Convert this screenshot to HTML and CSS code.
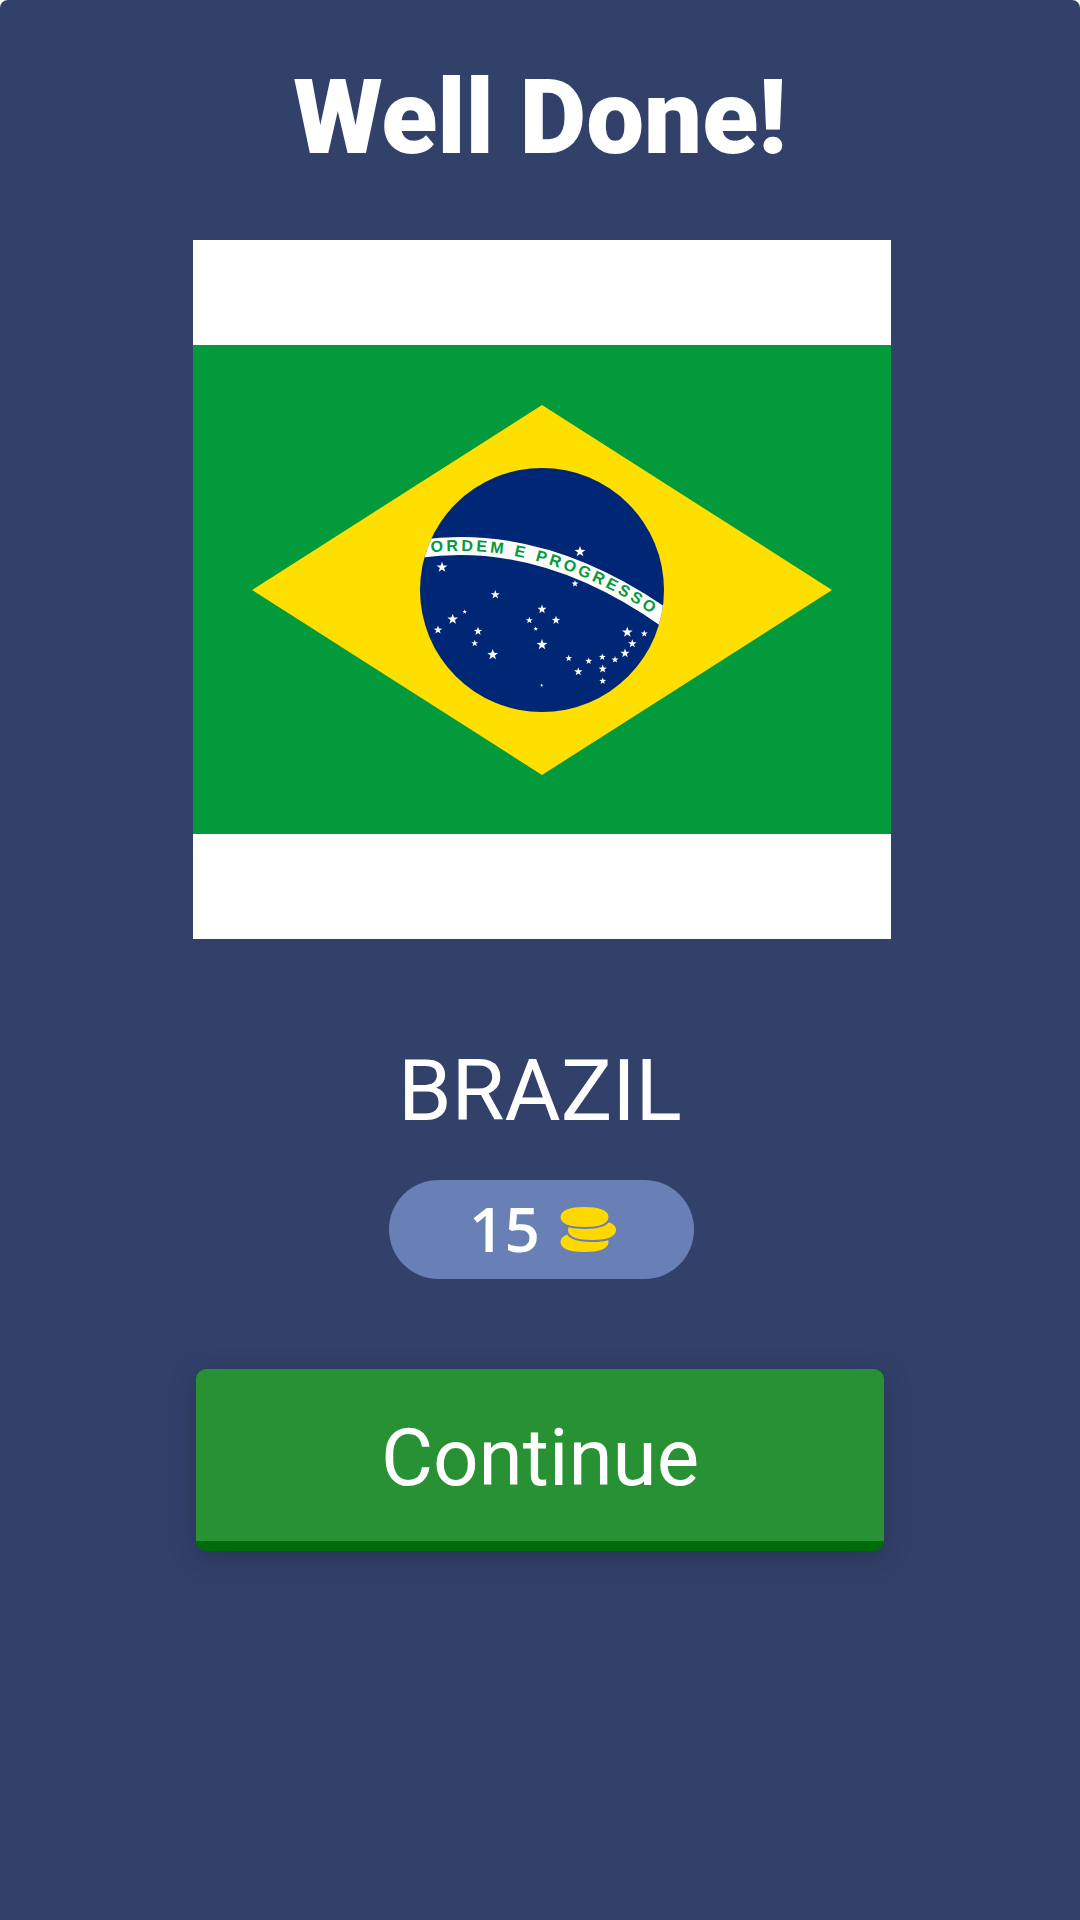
FILE: index.html
```html
<!DOCTYPE html>
<html>
<head>
<meta charset="utf-8">
<title>Well Done!</title>
<link rel="stylesheet" href="styles.css">
</head>
<body>
<main class="screen">
  <h1 class="title">Well Done!</h1>
  <svg class="flag" viewBox="0 0 698 699" role="img" aria-label="Flag of Brazil">
    <defs>
      <polygon id="s" points="0,-1.2 .28,-.39 1.14,-.37 .456,.149 .706,.97 0,.48 -.706,.97 -.456,.149 -1.14,-.37 -.28,-.39"/>
      <clipPath id="disc"><circle cx="349" cy="350" r="122"/></clipPath>
      <path id="motto" d="M225 314 Q350 296 475 385"/>
    </defs>
    <rect width="698" height="699" fill="#fff"/>
    <rect y="105" width="698" height="489" fill="#029a3a"/>
    <polygon points="59,350 349,165 639,350 349,535" fill="#fedf00"/>
    <circle cx="349" cy="350" r="122" fill="#002776"/>
    <g clip-path="url(#disc)">
      <path d="M225 309 Q350 291 475 380" fill="none" stroke="#fff" stroke-width="18"/>
    </g>
    <text class="motto"><textPath href="#motto" startOffset="13">ORDEM E PROGRESSO</textPath></text>
    <g fill="#fff">
      <use href="#s" transform="translate(249 327.3) scale(4.7)"/>
      <use href="#s" transform="translate(387 311.7) scale(4.7)"/>
      <use href="#s" transform="translate(382 343.7) scale(3)"/>
      <use href="#s" transform="translate(302.3 354.7) scale(4)"/>
      <use href="#s" transform="translate(271.7 371.7) scale(2)"/>
      <use href="#s" transform="translate(259.7 379.3) scale(4.7)"/>
      <use href="#s" transform="translate(245 390) scale(3.7)"/>
      <use href="#s" transform="translate(285 391.3) scale(3.7)"/>
      <use href="#s" transform="translate(281.7 403.3) scale(3)"/>
      <use href="#s" transform="translate(299.7 414.7) scale(4.7)"/>
      <use href="#s" transform="translate(349 369.3) scale(4)"/>
      <use href="#s" transform="translate(336.3 380.3) scale(3)"/>
      <use href="#s" transform="translate(363 380.3) scale(3.7)"/>
      <use href="#s" transform="translate(342.7 388.7) scale(2)"/>
      <use href="#s" transform="translate(349 404.7) scale(4.7)"/>
      <use href="#s" transform="translate(348.7 445.3) scale(1.4)"/>
      <use href="#s" transform="translate(375.7 418.3) scale(3)"/>
      <use href="#s" transform="translate(395.7 421) scale(3)"/>
      <use href="#s" transform="translate(409.3 417) scale(3)"/>
      <use href="#s" transform="translate(422 419.7) scale(3)"/>
      <use href="#s" transform="translate(432 413.3) scale(4)"/>
      <use href="#s" transform="translate(439.3 403.7) scale(3.7)"/>
      <use href="#s" transform="translate(434.3 392.3) scale(4.7)"/>
      <use href="#s" transform="translate(451.3 393.7) scale(3)"/>
      <use href="#s" transform="translate(409.7 429) scale(3.7)"/>
      <use href="#s" transform="translate(385.3 431.7) scale(3.7)"/>
      <use href="#s" transform="translate(409.7 441) scale(3)"/>
    </g>
  </svg>
  <p class="country">BRAZIL</p>
  <div class="reward">
    <span class="reward-value">15</span>
    <svg class="coins" viewBox="0 0 57 45" aria-hidden="true">
      <defs>
        <path id="coin" d="M0 10C0 3 10 0 24 0S48 3 48 10S38 20 24 20S0 17 0 10Z"/>
      </defs>
      <use href="#coin" transform="translate(.5 25)" fill="#ffd800"/>
      <use href="#coin" transform="translate(8 13)" fill="#ffd800" stroke="#6880b6" stroke-width="4" paint-order="stroke"/>
      <use href="#coin" transform="translate(.5 0)" fill="#ffd800" stroke="#6880b6" stroke-width="4" paint-order="stroke"/>
    </svg>
  </div>
  <button class="continue" type="button">Continue</button>
</main>
</body>
</html>
```
FILE: styles.css
```css
* { box-sizing: border-box; }
html, body { margin: 0; padding: 0; background: #fff; }
.screen {
  width: 1080px;
  height: 1920px;
  background: #32416a;
  border-radius: 8px 8px 0 0;
  display: flex;
  flex-direction: column;
  align-items: center;
  color: #fff;
}
.title {
  margin: 0;
  height: 240px;
  padding-top: 53px;
  font-family: Roboto;
  font-size: 103px;
  font-weight: 900;
  font-stretch: 100%;
  line-height: 130px;
  text-align: center;
}
.flag { display: block; width: 698px; height: 699px; margin-left: 4px; flex: none; }
.motto {
  font-family: "Liberation Sans", sans-serif;
  font-size: 16px;
  font-weight: 700;
  letter-spacing: 3.2px;
  fill: #029a3a;
}
.country {
  margin: 100px 0 0;
  font-family: Roboto;
  font-size: 86px;
  font-weight: 400;
  font-stretch: 100%;
  line-height: 104px;
  text-align: center;
}
.reward {
  width: 305px;
  height: 99px;
  margin: 37px 0 0 3px;
  padding-left: 3px;
  border-radius: 50px;
  background: #6880b6;
  display: flex;
  align-items: center;
  justify-content: center;
  gap: 20px;
}
.reward-value { padding-bottom: 4px; font-family: "Open Sans"; font-size: 62px; line-height: 1; font-weight: 600; }
.coins { display: block; width: 57px; height: 45px; }
.continue {
  width: 688px;
  height: 182px;
  margin: 90px 0 0 0;
  padding: 6px 0 0;
  border: 0;
  border-bottom: 10px solid #006b0a;
  border-radius: 10px;
  background: #289134;
  color: #fff;
  font-family: Roboto;
  font-size: 80px;
  font-weight: 400;
  font-stretch: 100%;
  line-height: 1;
  box-shadow: 0 6px 24px rgba(20, 28, 50, .35);
}
```
